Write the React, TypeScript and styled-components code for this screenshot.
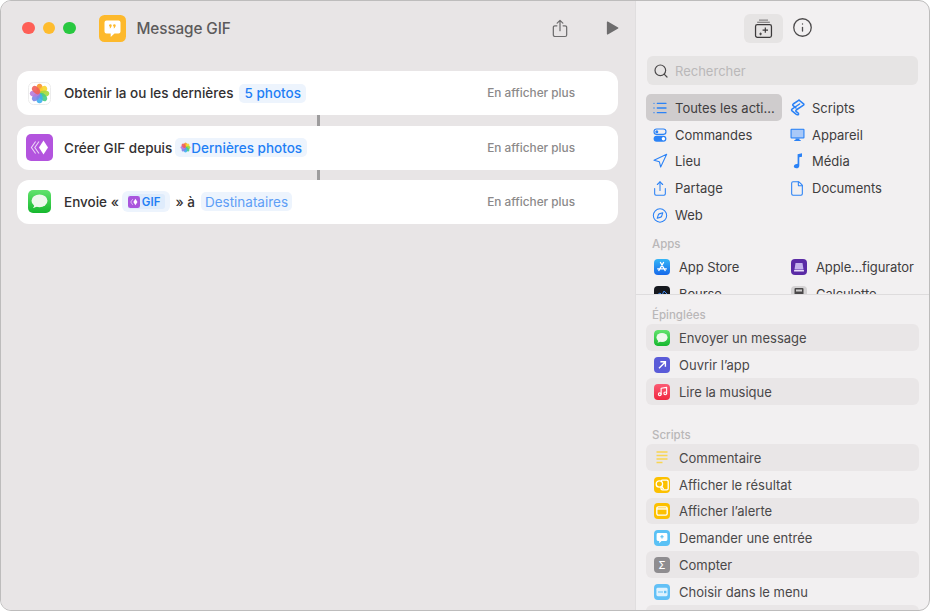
import React from "react";
import styled, { createGlobalStyle } from "styled-components";
import { List, Navigation, Share, File, Compass, Info, Search, Music } from "lucide-react";

const Global = createGlobalStyle`
  html, body { margin: 0; padding: 0; background: #fff; }
  body { font-family: Inter, "Noto Sans", "Liberation Sans", sans-serif; -webkit-font-smoothing: antialiased; }
`;

const Window = styled.div`
  width: 930px; height: 611px; box-sizing: border-box;
  border: 1px solid #bdbcbc; border-radius: 11px; overflow: hidden;
  display: flex; background: #f2f0f1;
`;
const LeftPane = styled.div`
  width: 634px; flex: none; background: #e8e5e6; border-right: 1px solid #e0dedf;
  box-sizing: content-box; display: flex; flex-direction: column;
`;
const Header = styled.header`
  height: 54px; display: flex; align-items: center; padding: 0 16px 0 21px; flex: none;
`;
const Dot = styled.span<{ $c: string }>`
  width: 12.5px; height: 12.5px; border-radius: 50%; background: ${p => p.$c}; margin-right: 8px; flex: none;
`;
const AppTile = styled.span`
  margin-left: 15px; margin-right: 11px; display: inline-flex; flex: none;
`;
const Title = styled.h1`
  margin: 0; font-size: 15.3px; font-weight: 500; color: #5c5a5b; flex: 1; letter-spacing: -0.1px;
`;
const HeaderBtn = styled.span<{ $mr: number }>`
  display: inline-flex; margin-right: ${p => p.$mr}px; color: #6e6d6e;
`;
const Flow = styled.div`
  padding: 16.4px 17px 0 16px; display: flex; flex-direction: column; align-items: stretch;
`;
const Card = styled.div`
  height: 44px; background: #fff; border-radius: 12px; display: flex; align-items: center;
  padding-left: 9px; font-size: 13.5px; font-weight: 500; color: #323031; white-space: pre;
`;
const CardIcon = styled.span`
  width: 27px; height: 27px; display: inline-flex; align-items: center; justify-content: center; margin-right: 11px; flex: none;
`;
const More = styled.span`
  margin-left: auto; margin-right: 43px; font-size: 11.8px; font-weight: 500; color: #8b898a;
`;
const Connector = styled.div`
  width: 3px; height: 10.2px; background: #9d9c9d; align-self: center; margin-left: 1px;
`;
const Pill = styled.span<{ $ml: number; $light?: boolean }>`
  display: inline-flex; align-items: center; height: 19px; margin-left: ${p => p.$ml}px; padding: 0 ${p => (p.$light ? 4 : 5)}px;
  background: #edf4fd; border-radius: 5px; color: ${p => (p.$light ? "#5d9ef6" : "#1f7ff5")};
  font-weight: ${p => (p.$light ? 400 : 500)};
`;
const GifPill = styled.span`
  display: inline-flex; align-items: center; height: 21px; margin: 0 5px 0 3px; padding: 0 5px 0 6px;
  background: #edf4fd; border-radius: 6px;
`;
const GifInner = styled.span`
  display: inline-flex; align-items: center; gap: 2px; height: 15px; padding: 0 5px 0 0;
  background: #dfecfc; border-radius: 3px; color: #1f7ff5; font-size: 11.5px; font-weight: 600;
`;

const RightPane = styled.div`
  flex: 1; min-width: 0; display: flex; flex-direction: column;
`;
const Library = styled.div`
  height: 293px; flex: none; overflow: hidden; border-bottom: 1px solid #dedcdd; box-sizing: content-box;
`;
const Toolbar = styled.div`
  display: flex; align-items: center; padding: 13px 0 0 108px; height: 29px;
`;
const ToolBtn = styled.span`
  width: 39px; height: 29px; border-radius: 6px; background: #e6e4e4; display: inline-flex;
  align-items: center; justify-content: center; padding-bottom: 1px; box-sizing: border-box;
`;
const InfoBtn = styled.span`
  display: inline-flex; margin: 0 0 2px 9px; color: #4e4c4d;
`;
const SearchBox = styled.div`
  margin: 13px 11px 0 11px; height: 29px; border-radius: 6px; background: #e6e4e4;
  display: flex; align-items: center; padding-left: 6px; gap: 6px;
  font-size: 13px; color: #bab8b9; font-weight: 400;
  svg { color: #4b494a; }
`;
const Grid = styled.div<{ $mt: number }>`
  display: grid; grid-template-columns: 137px 137px; margin: ${p => p.$mt}px 0 0 10px;
`;
const Category = styled.div<{ $sel?: boolean }>`
  height: 26.8px; box-sizing: border-box; padding: 1px 0 0 6px; display: flex; align-items: center; gap: 7px; font-size: 13px;
  color: #3f3d3e; border-radius: 5px; margin-right: 1px; white-space: nowrap;
  background: ${p => (p.$sel ? "#cfcccd" : "transparent")};
`;
const CatIcon = styled.span`
  width: 16px; height: 16px; display: inline-flex; align-items: center; justify-content: center; color: #2b82f6; flex: none;
`;
const SectionLabel = styled.div<{ $mt: number }>`
  margin: ${p => p.$mt}px 0 0 16px; height: 14px; line-height: 14px; font-size: 11.5px; font-weight: 500; color: #b9b7b8;
`;
const AppItem = styled.div`
  height: 26.8px; display: flex; align-items: center; gap: 9px; padding-left: 8px; font-size: 13px;
  color: #3f3d3e; white-space: nowrap; letter-spacing: -0.1px;
`;
const Pinned = styled.div`
  flex: 1; min-height: 0; overflow: hidden;
`;
const Rows = styled.div<{ $mt: number }>`
  margin: ${p => p.$mt}px 10px 0 10px;
`;
const Row = styled.div<{ $tall?: boolean }>`
  height: ${p => (p.$tall ? 27 : 26.8)}px; box-sizing: border-box; padding: ${p => (p.$tall ? 0 : 1)}px 0 0 8px;
  display: flex; align-items: center; gap: 9px;
  font-size: 13px; color: #4a4849; border-radius: 6px; white-space: nowrap;
  &:nth-child(odd) { background: #e9e6e7; }
`;
const Tile = styled.span<{ $bg: string }>`
  width: 16px; height: 16px; border-radius: 4px; background: ${p => p.$bg}; display: inline-flex;
  align-items: center; justify-content: center; flex: none; overflow: hidden; color: #fff;
`;
const Sigma = styled.span`
  font-size: 10px; font-weight: 500; color: #fff; line-height: 1;
`;

const PETALS = ["#f9962e", "#f9d52e", "#a3d93c", "#45cc85", "#3fb0f0", "#7f86e6", "#b77cdc", "#f0605a"];

const PhotosFlower = () => (
  <svg width="11" height="11" viewBox="0 0 24 24">
    {PETALS.map((c, i) => (
      <ellipse key={c} cx="12" cy="6.6" rx="3.8" ry="5.6" fill={c} opacity="0.92" transform={`rotate(${i * 45} 12 12)`} />
    ))}
  </svg>
);

const PhotosIcon = () => (
  <svg width="23" height="23" viewBox="0 0 23 23">
    <rect x="0.5" y="0.5" width="22" height="22" rx="5" fill="#fff" stroke="#ececec" />
    <g transform="translate(1.1 1.1) scale(0.87)">
      {PETALS.map((c, i) => (
        <ellipse key={c} cx="12" cy="6.4" rx="3.6" ry="5.6" fill={c} opacity="0.9" transform={`rotate(${i * 45} 12 12)`} />
      ))}
    </g>
  </svg>
);

const GifIcon = () => (
  <svg width="27" height="27" viewBox="0 0 27 27">
    <rect width="27" height="27" rx="5" fill="#b354de" />
    <path d="M17.5 6.5l4.5 7-4.5 7-4.5-7z" fill="#fff" />
    <path d="M13 7.5l-4.2 6 4.2 6M9.6 7.5l-4.2 6 4.2 6" fill="none" stroke="#fff" strokeOpacity=".75" strokeWidth="1.1" />
  </svg>
);

const MessagesIcon = ({ size }: { size: number }) => (
  <svg width={size} height={size} viewBox="0 0 23 23">
    <defs>
      <linearGradient id={`msg${size}`} x1="0" y1="0" x2="0" y2="1">
        <stop offset="0" stopColor="#62e36d" />
        <stop offset="1" stopColor="#16b82e" />
      </linearGradient>
    </defs>
    <rect width="23" height="23" rx="5" fill={`url(#msg${size})`} />
    <ellipse cx="11.5" cy="10.8" rx="8" ry="6.4" fill="#eef8ec" />
    <path d="M6.5 14.5c0 1.6-.8 2.8-1.7 3.4 1.8 0 3.4-.8 4.4-1.8z" fill="#eef8ec" />
  </svg>
);

const MiniGif = () => (
  <svg width="12" height="12" viewBox="0 0 13 13">
    <rect width="13" height="13" rx="2.5" fill="#a955dd" />
    <path d="M8 3l2.2 3.5L8 10 5.8 6.5z" fill="#fff" />
    <path d="M5.2 3.4L3 6.5l2.2 3.1" fill="none" stroke="#fff" strokeOpacity=".7" strokeWidth=".9" />
  </svg>
);

const TitleIcon = () => (
  <svg width="27" height="27" viewBox="0 0 27 27">
    <rect width="27" height="27" rx="5.5" fill="#fdb92c" />
    <path d="M7.5 5.5h12a2 2 0 012 2v9a2 2 0 01-2 2h-4l-3.8 3.6v-3.6H7.5a2 2 0 01-2-2v-9a2 2 0 012-2z" fill="#fff" />
    <circle cx="11.4" cy="10.6" r="1.3" fill="#fdb92c" />
    <circle cx="15.4" cy="10.6" r="1.3" fill="#fdb92c" />
    <path d="M11.9 11l-.8 2.2M15.9 11l-.8 2.2" stroke="#fdb92c" strokeWidth="1" />
  </svg>
);

const ShareGlyph = () => (
  <svg width="16" height="19" viewBox="0 0 18 21" fill="none" stroke="currentColor" strokeWidth="1.4" strokeLinecap="round" strokeLinejoin="round">
    <path d="M5.5 7.5H3.2A1.7 1.7 0 001.5 9.2v8.6a1.7 1.7 0 001.7 1.7h11.6a1.7 1.7 0 001.7-1.7V9.2a1.7 1.7 0 00-1.7-1.7h-2.3" />
    <path d="M9 13V1.5M5.8 4.4L9 1.3l3.2 3.1" />
  </svg>
);

const PlayGlyph = () => (
  <svg width="13" height="14" viewBox="0 0 15 16"><path d="M1 1.2v13.6c0 .6.6.9 1.1.6L14 8.6c.5-.3.5-.9 0-1.2L2.1.6C1.6.3 1 .6 1 1.2z" fill="#6e6d6e" /></svg>
);

const LibraryGlyph = () => (
  <svg width="19" height="19" viewBox="0 0 20 21" fill="none" stroke="#3c3a3b">
    <path d="M5 1.2h10" stroke="#8a8889" strokeWidth="1.2" />
    <path d="M3 3.6h14" stroke="#6f6d6e" strokeWidth="1.2" />
    <rect x="1.2" y="6.2" width="17.6" height="14" rx="2" strokeWidth="1.4" />
    <path d="M12 9.3v6M9 12.3h6" strokeWidth="1.3" />
    <path d="M6.8 15v3M5.3 16.5h3" strokeWidth="1" />
  </svg>
);

const TogglesGlyph = () => (
  <svg width="14" height="14" viewBox="0 0 14 14">
    <rect x="1" y="1" width="12" height="5.4" rx="2.7" fill="none" stroke="#2b82f6" strokeWidth="1.1" />
    <circle cx="3.8" cy="3.7" r="1.5" fill="#2b82f6" />
    <rect x="0.6" y="7.7" width="12.8" height="6" rx="3" fill="#2b82f6" />
    <circle cx="10.4" cy="10.7" r="1.7" fill="#fff" />
  </svg>
);

const ScriptsGlyph = () => (
  <svg width="15" height="17" viewBox="0 0 15 17" fill="none" stroke="#2b82f6" strokeWidth="1.5" strokeLinejoin="round" strokeLinecap="round">
    <path d="M9 1.2l4.6 3.6c.5.4.4 1-.1 1.4L6.2 11c-.7.5-.5 1.2.1 1.6l2 1.6c.8.7.1 1.8-.9 1.6-.5-.1-1-.4-1.4-.7l-4-3.3c-.6-.5-.6-1.2 0-1.7L9.6 5" />
    <path d="M9 1.2L3.2 5c-.7.5-.7 1.1-.1 1.6L6 9" />
  </svg>
);

const MonitorGlyph = () => (
  <svg width="15" height="14" viewBox="0 0 15 14">
    <rect x="0.5" y="0.7" width="14" height="9.8" rx="1" fill="#2b82f6" />
    <rect x="1.6" y="1.8" width="11.8" height="7.6" fill="#a9c9f8" />
    <path d="M5.5 10.5h4v1.6h1.2v1H4.3v-1h1.2z" fill="#2b82f6" />
  </svg>
);

const NoteGlyph = () => (
  <svg width="12" height="16" viewBox="0 0 12 16">
    <path d="M6.6 1.2L11 .3v3.4l-2.7.6v8.4c0 1.6-1.3 2.6-3 2.6-1.4 0-2.5-.8-2.5-2 0-1.4 1.3-2.2 3-2.4l.8-.1z" fill="#2b82f6" />
  </svg>
);

const AppStoreTile = () => (
  <Tile $bg="linear-gradient(#35b6f7,#1668ea)">
    <svg width="12" height="12" viewBox="0 0 12 12" fill="none" stroke="#fff" strokeWidth="1.2" strokeLinecap="round">
      <path d="M7.6 1.4L2.8 9.6M4.4 1.4l4.8 8.2M1.6 7.8h8.8" />
    </svg>
  </Tile>
);
const ConfiguratorTile = () => (
  <Tile $bg="#5a2ba5">
    <svg width="12" height="12" viewBox="0 0 12 12">
      <path d="M2.5 2h7l1 6.5h-9z" fill="#c4b3ec" />
      <rect x="1" y="9" width="10" height="1.6" rx=".5" fill="#e8def9" />
    </svg>
  </Tile>
);
const StocksTile = () => (
  <Tile $bg="#16181e">
    <svg width="12" height="12" viewBox="0 0 12 12"><path d="M1 7l3-2 2 2 2-4 3 3" fill="none" stroke="#3f86e8" strokeWidth="1" /></svg>
  </Tile>
);
const CalcTile = () => (
  <Tile $bg="#d4d2d3">
    <svg width="12" height="14" viewBox="0 0 12 14"><rect x="1.5" y="1" width="9" height="12" rx="1" fill="#4a4849" /><rect x="3" y="2.5" width="6" height="2" fill="#cfcdce" /></svg>
  </Tile>
);

const OpenTile = () => (
  <Tile $bg="#5a5bd8">
    <svg width="12" height="12" viewBox="0 0 12 12" fill="none" stroke="#fff" strokeWidth="1.4"><path d="M3 9.2L9 3.2M4.4 2.8h5v5" /></svg>
  </Tile>
);
const MusicTile = () => (
  <Tile $bg="linear-gradient(#fb5c74,#f0263f)"><Music size={11} strokeWidth={2.4} /></Tile>
);
const CommentTile = () => (
  <svg width="16" height="16" viewBox="0 0 16 16" stroke="#f9d552" strokeWidth="1.5">
    <path d="M2.5 2h11M2.5 5.5h11M2.5 9h11M2.5 12.5h6" />
  </svg>
);
const ResultTile = () => (
  <Tile $bg="#fcc000">
    <svg width="14" height="12" viewBox="0 0 14 12" fill="none" stroke="#fff" strokeWidth="1.3">
      <rect x="6" y="1.2" width="7.2" height="9.6" rx="1.4" /><circle cx="4.4" cy="5" r="3.2" fill="#fcc000" /><path d="M6.6 7.4L8.6 10" />
    </svg>
  </Tile>
);
const AlertTile = () => (
  <Tile $bg="#fcc000">
    <svg width="12" height="10" viewBox="0 0 12 10" fill="none" stroke="#fff" strokeWidth="1.3"><rect x=".8" y=".8" width="10.4" height="8.4" rx="1.6" /><path d="M1 3h10" /></svg>
  </Tile>
);
const AskTile = () => (
  <Tile $bg="#5ac1f5">
    <svg width="12" height="12" viewBox="0 0 12 12">
      <path d="M2 1h8a1.4 1.4 0 011.4 1.4v5.2A1.4 1.4 0 0110 9H5.6l-2.4 2.2V9H2A1.4 1.4 0 01.6 7.6V2.4A1.4 1.4 0 012 1z" fill="#fff" />
      <path d="M6 3v3.4M4.3 4.7h3.4" stroke="#5ac1f5" strokeWidth="1.1" />
    </svg>
  </Tile>
);
const CountTile = () => (<Tile $bg="#8f8d90"><Sigma>Σ</Sigma></Tile>);
const MenuTile = () => (
  <Tile $bg="#62c0f6">
    <svg width="12" height="10" viewBox="0 0 12 10"><rect x=".4" y=".8" width="11.2" height="8.4" rx="1.4" fill="#dff2fe" /><path d="M2 5h5" stroke="#62c0f6" strokeWidth="1.2" /><rect x="8" y="3.8" width="2.4" height="2.4" fill="#62c0f6" /></svg>
  </Tile>
);

export default function App() {
  return (
    <>
      <Global />
      <Window>
        <LeftPane>
          <Header>
            <Dot $c="#fe5f57" /><Dot $c="#febc2e" /><Dot $c="#28c840" />
            <AppTile><TitleIcon /></AppTile>
            <Title>Message GIF</Title>
            <HeaderBtn $mr={38}><ShareGlyph /></HeaderBtn>
            <HeaderBtn $mr={0}><PlayGlyph /></HeaderBtn>
          </Header>
          <Flow>
            <Card>
              <CardIcon><PhotosIcon /></CardIcon>Obtenir la ou les dernières
              <Pill $ml={6}>5 photos</Pill>
              <More>En afficher plus</More>
            </Card>
            <Connector />
            <Card>
              <CardIcon><GifIcon /></CardIcon>Créer GIF depuis
              <Pill $ml={3} $light={false}><PhotosFlower />Dernières photos</Pill>
              <More>En afficher plus</More>
            </Card>
            <Connector />
            <Card>
              <CardIcon><MessagesIcon size={23} /></CardIcon>Envoie «
              <GifPill><GifInner><MiniGif />GIF</GifInner></GifPill>» à
              <Pill $ml={6} $light>Destinataires</Pill>
              <More>En afficher plus</More>
            </Card>
          </Flow>
        </LeftPane>
        <RightPane>
          <Library>
            <Toolbar>
              <ToolBtn><LibraryGlyph /></ToolBtn>
              <InfoBtn><Info size={21} strokeWidth={1.5} /></InfoBtn>
            </Toolbar>
            <SearchBox><Search size={16} strokeWidth={1.8} />Rechercher</SearchBox>
            <Grid $mt={9}>
              <Category $sel><CatIcon><List size={16} strokeWidth={2} /></CatIcon>Toutes les acti...</Category>
              <Category><CatIcon><ScriptsGlyph /></CatIcon>Scripts</Category>
              <Category><CatIcon><TogglesGlyph /></CatIcon>Commandes</Category>
              <Category><CatIcon><MonitorGlyph /></CatIcon>Appareil</Category>
              <Category><CatIcon><Navigation size={16} strokeWidth={1.6} /></CatIcon>Lieu</Category>
              <Category><CatIcon><NoteGlyph /></CatIcon>Média</Category>
              <Category><CatIcon><Share size={17} strokeWidth={1.6} /></CatIcon>Partage</Category>
              <Category><CatIcon><File size={17} strokeWidth={1.6} /></CatIcon>Documents</Category>
              <Category><CatIcon><Compass size={17} strokeWidth={1.6} /></CatIcon>Web</Category>
            </Grid>
            <SectionLabel $mt={9}>Apps</SectionLabel>
            <Grid $mt={3}>
              <AppItem><AppStoreTile />App Store</AppItem>
              <AppItem><ConfiguratorTile />Apple...figurator</AppItem>
              <AppItem><StocksTile />Bourse</AppItem>
              <AppItem><CalcTile />Calculette</AppItem>
            </Grid>
          </Library>
          <Pinned>
            <SectionLabel $mt={13}>Épinglées</SectionLabel>
            <Rows $mt={2}>
              <Row $tall><Tile $bg="transparent"><MessagesIcon size={16} /></Tile>Envoyer un message</Row>
              <Row $tall><OpenTile />Ouvrir l’app</Row>
              <Row $tall><MusicTile />Lire la musique</Row>
            </Rows>
            <SectionLabel $mt={23}>Scripts</SectionLabel>
            <Rows $mt={2}>
              <Row><CommentTile />Commentaire</Row>
              <Row><ResultTile />Afficher le résultat</Row>
              <Row><AlertTile />Afficher l’alerte</Row>
              <Row><AskTile />Demander une entrée</Row>
              <Row><CountTile />Compter</Row>
              <Row><MenuTile />Choisir dans le menu</Row>
              <Row />
            </Rows>
          </Pinned>
        </RightPane>
      </Window>
    </>
  );
}
